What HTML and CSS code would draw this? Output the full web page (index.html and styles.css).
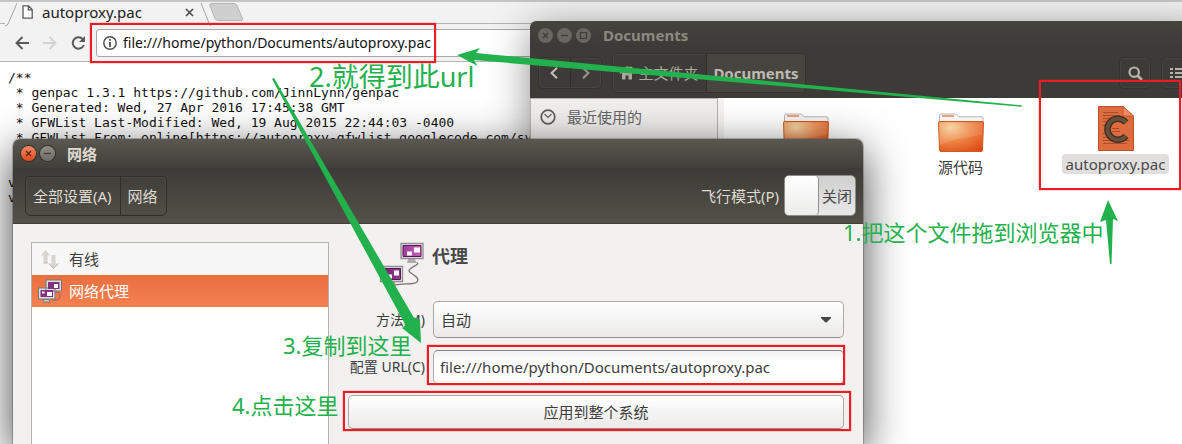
FILE: index.html
```html
<!DOCTYPE html>
<html lang="zh-CN">
<head>
<meta charset="utf-8">
<title>autoproxy.pac</title>
<link rel="stylesheet" href="styles.css">
</head>
<body>
<div class="desktop">
  <section class="browser" aria-label="autoproxy.pac">
    <div class="tabstrip">
      <svg class="tab-slope" width="12" height="24" viewBox="0 0 12 24"><path d="M0 24Q2 24 3 22L12 1" fill="none" stroke="#a5a5a5"/></svg>
      <div class="tab">
        <svg width="11" height="14" viewBox="0 0 11 14"><path d="M1 .8h5.500L10.200 4.500V13.200H1zM6.300.8v4h3.900" fill="#fff" stroke="#5a5a5a" stroke-width="1.300"/></svg>
        <span class="tab-title">autoproxy.pac</span>
        <button class="plain" aria-label="关闭标签页"><svg width="9" height="9" viewBox="0 0 9 9"><path d="M1 1l7 7M8 1L1 8" stroke="#4a4a4a" stroke-width="1.600"/></svg></button>
      </div>
      <svg class="tab-slope" width="11" height="24" viewBox="0 0 11 24"><path d="M1 1l8 20q1 3 2 3" fill="none" stroke="#a5a5a5"/></svg>
      <button class="plain new-tab" aria-label="新标签页"><svg width="35" height="18" viewBox="0 0 35 18"><path d="M3 .5h22q2 0 3 2l5.500 13q.7 2-1.500 2H9q-2 0-3-2L.8 2.500Q0 .5 3 .5z" fill="#cfcfcf" stroke="#b4b4b4"/></svg></button>
    </div>
    <div class="address-row">
      <button class="plain" aria-label="后退"><svg width="14" height="14" viewBox="0 0 14 14"><path d="M14 7H2M7.500 1L1.500 7l6 6" fill="none" stroke="#595959" stroke-width="1.900"/></svg></button>
      <button class="plain" aria-label="前进"><svg width="14" height="14" viewBox="0 0 14 14"><path d="M0 7h12M6.500 1l6 6-6 6" fill="none" stroke="#d2d2d2" stroke-width="1.900"/></svg></button>
      <button class="plain" aria-label="重新加载"><svg width="15" height="14" viewBox="0 0 15 14"><path d="M11.800 3.200A5.700 5.700 0 1 0 12.800 9" fill="none" stroke="#595959" stroke-width="2"/><path d="M14 0v6H8z" fill="#595959"/></svg></button>
      <div class="omnibox">
        <svg width="14" height="14" viewBox="0 0 14 14"><circle cx="7" cy="7" r="6.200" fill="none" stroke="#4a4a4a" stroke-width="1.400"/><path d="M7 3v1.700M7 6v5" stroke="#4a4a4a" stroke-width="1.700"/></svg>
        <input class="url" aria-label="地址" value="file:///home/python/Documents/autoproxy.pac">
      </div>
    </div>
    <pre class="source">/**
 * genpac 1.3.1 https://github.com/JinnLynn/genpac
 * Generated: Wed, 27 Apr 2016 17:45:38 GMT
 * GFWList Last-Modified: Wed, 19 Aug 2015 22:44:03 -0400
 * GFWList From: online[https://autoproxy-gfwlist.googlecode.com/svn


v
v</pre>
  </section>

  <section class="files" aria-label="Documents">
    <header class="files-head">
      <div class="files-title">
        <button class="dot dim" aria-label="关闭"><svg width="15" height="15" viewBox="0 0 15 15"><path d="M5 5l5 5M10 5l-5 5" stroke="#3b3a36" stroke-width="1.200"/></svg></button>
        <button class="dot dim" aria-label="最小化"><svg width="15" height="15" viewBox="0 0 15 15"><path d="M4 7.500h7" stroke="#3b3a36" stroke-width="1.200"/></svg></button>
        <button class="dot dim" aria-label="最大化"><svg width="15" height="15" viewBox="0 0 15 15"><path d="M4.500 4.500h6v6h-6z" fill="none" stroke="#3b3a36" stroke-width="1.200"/></svg></button>
        <strong>Documents</strong>
      </div>
      <div class="files-tools">
        <div class="group nav">
          <button aria-label="后退"><svg width="8" height="12" viewBox="0 0 8 12"><path d="M7 .8L1.600 6 7 11.200" fill="none" stroke="#c4c1b8" stroke-width="2"/></svg></button>
          <button aria-label="前进"><svg width="8" height="12" viewBox="0 0 8 12"><path d="M1 .8L6.400 6 1 11.200" fill="none" stroke="#99968e" stroke-width="2"/></svg></button>
        </div>
        <div class="group path">
          <button class="home"><svg width="14" height="14" viewBox="0 0 14 14"><path d="M0 7.500L7 1l2.500 2.300V1.500h2v3.700L14 7.500" fill="none" stroke="#aaa79f" stroke-width="1.600"/><path d="M2 7l5-4.500L12 7v6.500H8.500v-4h-3v4H2z" fill="#aaa79f"/></svg>主文件夹</button>
          <button class="here">Documents</button>
        </div>
        <button class="square find" aria-label="搜索"><svg width="15" height="15" viewBox="0 0 15 15"><circle cx="6.200" cy="6.200" r="4.700" fill="none" stroke="#b5b2a9" stroke-width="2.200"/><path d="M9.500 9.500L14 14" stroke="#b5b2a9" stroke-width="2.600"/></svg></button>
        <button class="square" aria-label="列表"><svg width="14" height="12" viewBox="0 0 14 12"><path d="M0 2h3M5 2h9M0 6h3M5 6h9M0 10h3M5 10h9" stroke="#b5b2a9" stroke-width="2"/></svg></button>
      </div>
    </header>
    <div class="files-body">
      <nav class="places">
        <a href="#recent"><svg width="16" height="16" viewBox="0 0 16 16"><circle cx="8" cy="8" r="6.800" fill="none" stroke="#5f5f5c" stroke-width="1.700"/><path d="M4.500 5l3.500 3.500L11.500 5" fill="none" stroke="#5f5f5c" stroke-width="1.200"/></svg>最近使用的</a>
      </nav>
      <div class="icons">
        <div class="item">
          <svg class="folder" width="46" height="40" viewBox="0 0 46 40"><use href="#folder"/></svg>
        </div>
        <div class="item">
          <svg class="folder" width="46" height="40" viewBox="0 0 46 40">
            <defs>
              <radialGradient id="fold" cx=".28" cy=".2" r="1"><stop offset="0" stop-color="#f5cf96"/><stop offset=".45" stop-color="#ee8546"/><stop offset="1" stop-color="#dd4710"/></radialGradient>
              <g id="folder">
                <path d="M1.500 12V2.500q0-1.500 1.500-1.500h14q1.500 0 2.500 1.200l1.500 1.600h23q1 0 1 1V12z" fill="#f4f4f4" stroke="#b6b6b6"/>
                <path d="M4 3h12" stroke="#f0a077" stroke-width="2"/>
                <path d="M.5 9.500q0-1 1-1h43q1 0 1 1L44.500 37q0 1.500-1.500 1.500H3Q1.500 38.500 1.500 37z" fill="url(#fold)" stroke="#cf5a22"/>
                <path d="M1.500 9.500h43L44 22Q22 24 1.500 32z" fill="#fff" opacity=".13"/>
              </g>
            </defs>
            <use href="#folder"/>
          </svg>
          <span class="name">源代码</span>
        </div>
        <div class="item">
          <svg width="36" height="45" viewBox="0 0 36 45">
            <path d="M.5.500H25L35.500 10v34.500H.5z" fill="#de6b3e" stroke="#b9532b"/>
            <path d="M25 .5V9q0 1 1 1h9.500z" fill="#f08a61" stroke="#c65c32"/>
            <path d="M5 6.500h15M5 9.500h17M5 12.500h14M5 15.500h3M5 19.500h2M5 27.500h3M5 31.500h4M5 34.500h26M5 37.500h24M14 25.500h8M14 22.500h7" stroke="#a94c27"/>
            <path d="M28 16.500A10.500 10.500 0 1 0 28 30" fill="none" stroke="#3c2b20" stroke-width="6.500"/>
            <path d="M28 16.500A10.500 10.500 0 1 0 28 30" fill="none" stroke="#65503b" stroke-width="4"/>
          </svg>
          <span class="name picked">autoproxy.pac</span>
        </div>
      </div>
    </div>
  </section>

  <section class="network" aria-label="网络">
    <header class="net-title">
      <button class="dot close" aria-label="关闭"><svg width="15" height="15" viewBox="0 0 15 15"><path d="M5 5l5 5M10 5l-5 5" stroke="#5a2410" stroke-width="1.200"/></svg></button>
      <button class="dot" aria-label="最小化"><svg width="15" height="15" viewBox="0 0 15 15"><path d="M4 7.500h7" stroke="#3b3a36" stroke-width="1.200"/></svg></button>
      <strong>网络</strong>
    </header>
    <div class="net-tools">
      <div class="group crumbs"><button>全部设置(A)</button><button>网络</button></div>
      <label class="flight">飞行模式(P)
        <input type="checkbox" class="sr">
        <span class="switch"><i></i><b>关闭</b></span>
      </label>
    </div>
    <div class="net-body">
      <div class="devices">
        <button class="device">
          <svg width="24" height="24" viewBox="0 0 24 24"><path d="M7.500 3L12 8.500H9.500V16h-4V8.500H3z" fill="#d9d6cf"/><path d="M13.500 8v8.500H11L15.500 21.500l5-5H17.500V8z" fill="#d9d6cf"/><path d="M5.500 16h4M11 16.500l4.500 5 5-5" fill="none" stroke="#bab7b0"/></svg>有线</button>
        <button class="device current">
          <svg width="24" height="24" viewBox="0 0 24 24"><path d="M18 13q5 1 4 5t-8 3" fill="none" stroke="#8a6b5d"/><path d="M8 1h15.500v11H8zM.5 9H17v11H.5z" fill="#ddd" stroke="#777"/><path d="M10 3h11.500v7H10zM2.500 11H15v7H2.500z" fill="#82307f"/><path d="M16 5h4v4h-4zM9 13h5v4H9zM4 12.500h2.500v2H4z" fill="#fff"/><path d="M6 20.500h5l1 2.500H5z" fill="#ccc" stroke="#777"/></svg>网络代理</button>
      </div>
      <form class="proxy">
        <div class="heading">
          <svg width="46" height="46" viewBox="0 0 46 46">
            <defs><linearGradient id="scr"><stop stop-color="#71206f"/><stop offset="1" stop-color="#c65bbb"/></linearGradient></defs>
            <path d="M38 21c4 1-9 5-8 8s12 6 8 11c-3 3-14 1-22 3" fill="none" stroke="#777" stroke-width="1.300"/>
            <path d="M29 17h7l1 3h2v1H28z" fill="#aaa"/><path d="M9 40h7l1 4H8z" fill="#aaa"/>
            <path d="M22 1.500h22v15H22zM1.500 24.500h22v15h-22z" fill="#e5e5e5" stroke="#909090" stroke-width="1.300"/>
            <path d="M24 3.500h18v11H24zM3.500 26.500h18v11h-18z" fill="url(#scr)" stroke="#5b175b"/>
            <path d="M35 5.500h6v5h-6zM28 9.500h5v4h-5zM15 28.500h5v5h-5zM8 32.500h5v4H8z" fill="#fff"/>
          </svg>
          <h1>代理</h1>
        </div>
        <div class="fields">
          <label for="method">方法(M)</label>
          <div class="pick"><select id="method"><option>自动</option></select><svg width="10" height="6" viewBox="0 0 10 6"><path d="M0 0h10v1L5.500 5.500h-1L0 1z" fill="#454545"/></svg></div>
          <label for="conf">配置 URL(C)</label>
          <input id="conf" class="conf" value="file:///home/python/Documents/autoproxy.pac">
        </div>
        <button type="button" class="apply">应用到整个系统</button>
      </form>
    </div>
  </section>

  <div class="frame frame-url"></div>
  <div class="frame frame-file"></div>
  <div class="frame frame-conf"></div>
  <div class="frame frame-apply"></div>
  <p class="note note-file">1.把这个文件拖到浏览器中</p>
  <p class="note note-url">2.就得到此url</p>
  <p class="note note-copy">3.复制到这里</p>
  <p class="note note-click">4.点击这里</p>
  <svg class="arrows" width="1182" height="444" viewBox="0 0 1182 444" aria-hidden="true">
    <path d="M457 55L480 48 476 53 1022 105.300 1021.500 106.800 474 60 477.500 66z"/>
    <path d="M272 79L274 78 413.500 317 420 320 421 343 402 328 405.500 325z"/>
    <path d="M1108 200L1118 221 1113 219 1111.500 264H1110L1106 220 1100 222z"/>
  </svg>
</div>
</body>
</html>
```
FILE: styles.css
```css
* { box-sizing: border-box; }
body {
  margin: 0;
  font: 15px/20px "Noto Sans", "Noto Sans CJK SC", sans-serif;
  color: #3c3c3c;
}
button, input, select { font: inherit; color: inherit; margin: 0; }
button { padding: 0; border: 0; background: none; }
svg { display: block; flex: none; }
.desktop { position: relative; height: 100vh; min-height: 444px; overflow: hidden; background: #fff; }

/* browser */
.tabstrip { display: flex; height: 24px; padding-left: 5px; background: #f2f2f2; border-top: 2px solid #c4c4c4; box-shadow: inset 0 -1px #b5b5b5; }
.tab-slope { background: #f2f2f2; }
.tab { display: flex; align-items: center; width: 183px; height: 22px; padding: 0 6px 2px 5px; background: #f2f2f2; }
.tab-title { flex: 1; margin-left: 9px; font-size: 15px; line-height: 18px; color: #222; }
.plain { display: grid; place-items: center; }
.new-tab { align-self: flex-start; margin: 1px 0 0 -2px; }
.address-row { display: flex; align-items: center; gap: 14px; height: 38px; padding: 0 15px; background: #f2f2f2; border-bottom: 1px solid #b5b5b5; }
.omnibox { flex: 1; display: flex; align-items: center; gap: 6px; height: 28px; margin-left: -4px; padding-left: 6px; background: #fff; border: 1px solid #a8a8a8; border-radius: 3px; }
.url { flex: 1; height: 24px; padding: 0; border: 0; background: none; font-size: 14px; color: #111; }
.source { margin: 0; padding: 8px; font: 13px/15px "DejaVu Sans Mono", monospace; color: #111; }

/* shared window parts */
.dot { width: 15px; height: 15px; border-radius: 50%; background: linear-gradient(#8f8d86, #6d6b65); box-shadow: 0 0 0 1px #33322e; }
.dot.dim { background: #686660; box-shadow: none; }
.dot.close { background: linear-gradient(#f58a63, #e0491b); }
.group { display: flex; border: 1px solid #302f2c; border-radius: 5px; box-shadow: inset 0 0 0 1px #4c4a45; }
.group button { display: flex; align-items: center; justify-content: center; }
.group button + button { border-left: 1px solid #302f2c; }

/* file manager */
.files { position: absolute; left: 530px; right: -20px; top: 21px; bottom: 0; display: flex; flex-direction: column; border-radius: 6px 6px 0 0; background: #fff; box-shadow: 0 8px 40px rgba(0, 0, 0, .45); }
.files-head { height: 77px; border-radius: 6px 6px 0 0; background: linear-gradient(#45443f, #3c3b37 24px); }
.files-title { display: flex; align-items: center; gap: 4px; height: 28px; padding-left: 8px; color: #8b8880; }
.files-title strong { margin-left: 8px; }
.files-tools { display: flex; align-items: center; gap: 10px; height: 49px; padding: 0 9px 1px 8px; color: #aaa79f; }
.nav, .path { border-color: #343330; box-shadow: inset 0 0 0 1px #45443f; }
.nav { width: 64px; height: 32px; }
.nav button { flex: 1; }
.path { height: 40px; }
.home { gap: 4px; width: 93px; }
.here { width: 99px; font-weight: 700; color: #bdbab1; background: #47453f; border-radius: 0 4px 4px 0; }
.square { display: grid; place-items: center; width: 32px; height: 32px; border: 1px solid #353430; border-radius: 5px; box-shadow: inset 0 0 0 1px #45443f; }
.find { margin-left: auto; }
.files-body { flex: 1; display: flex; }
.places { width: 188px; border: 1px solid #b3b2b0; border-bottom: 0; background: #efeeec; }
.places a { display: flex; align-items: center; gap: 11px; height: 36px; padding-left: 9px; color: #666; text-decoration: none; }
.icons { flex: 1; display: grid; grid-template-columns: repeat(3, 155px); align-content: start; padding: 8px 0 0 4px; border-left: 6px solid #f4f3f2; }
.item { display: flex; flex-direction: column; align-items: center; }
.folder { margin-top: 7px; }
.folder + .name { margin-top: 4px; }
.name { padding: 0 4px; border-radius: 4px; }
.picked { margin-top: 3px; background: #e0dfde; color: #4a4a4a; }

/* network dialog */
.network { position: absolute; left: 13px; top: 139px; bottom: 0; width: 850px; display: flex; flex-direction: column; border-radius: 7px 7px 0 0; background: #f2f1ef; box-shadow: 0 12px 44px rgba(0, 0, 0, .75), 0 0 0 1px rgba(80, 80, 75, .3); }
.net-title { display: flex; align-items: center; gap: 4px; height: 29px; padding-left: 8px; border-radius: 7px 7px 0 0; background: linear-gradient(#5a5850, #403f3a); color: #dfdbd2; }
.net-title strong { margin-left: 8px; }
.net-tools { display: flex; align-items: center; justify-content: space-between; height: 56px; padding: 0 7px 0 12px; background: linear-gradient(#3c3b37, #545149); border-bottom: 1px solid #403e39; color: #dfdbd2; }
.crumbs { height: 40px; }
.crumbs button { padding: 0 8px 0 7px; }
.flight { display: flex; align-items: center; gap: 5px; }
.sr { position: absolute; opacity: 0; pointer-events: none; }
.switch { display: flex; width: 72px; height: 41px; border: 1px solid #8f8d88; border-radius: 5px; background: linear-gradient(#cfcfcf, #e8e8e8); color: #4a4a4a; }
.switch i { width: 34px; border-right: 1px solid #8f8f8f; border-radius: 4px; background: linear-gradient(#fff, #ececeb); }
.switch b { flex: 1; align-self: center; text-align: center; font-weight: 400; font-size: 15px; }
.net-body { flex: 1; display: flex; gap: 19px; padding: 18px 19px 0 18px; }
.devices { width: 298px; border: 1px solid #b5b4b1; border-bottom: 0; background: #fff; }
.device { display: flex; align-items: center; gap: 7px; width: 100%; height: 32px; padding-left: 6px; background: #f7f7f7; }
.current { color: #fff; background: linear-gradient(#e96f3f, #f58050); }
.proxy { flex: 1; }
.heading { display: flex; gap: 7px; margin-left: 31px; height: 59px; }
h1 { margin: 1px 0 0; font-size: 18px; line-height: 26px; color: #484848; }
.fields { display: grid; grid-template-columns: 77px 1fr; align-items: center; gap: 12px 8px; margin-bottom: 11px; }
.fields label { text-align: right; white-space: nowrap; font-size: 14px; }
.pick { display: grid; align-items: center; }
.pick > * { grid-area: 1 / 1; }
.pick svg { justify-self: end; margin-right: 13px; pointer-events: none; }
.pick select { width: 100%; height: 37px; padding: 0 7px; appearance: none; }
.pick select, .apply { border: 1px solid #aaa9a6; border-bottom-color: #8f8e8b; border-radius: 5px; background: linear-gradient(#fff, #ebeae9); }
.conf { width: 100%; height: 34px; padding: 0 6px; border: 1px solid #aaa; border-top-color: #858585; border-radius: 5px; background: linear-gradient(#f1f1f1, #fff 10px); }
.apply { width: 100%; height: 34px; }

/* annotations */
.frame { position: absolute; border: 2px solid #ed1c24; box-shadow: 0 0 1px #ed1c24; }
.frame-url { left: 90px; top: 23px; width: 346px; height: 40px; }
.frame-file { left: 1039px; top: 80px; width: 142px; height: 110px; }
.frame-conf { left: 427px; top: 345px; width: 418px; height: 40px; }
.frame-apply { left: 343px; top: 391px; width: 508px; height: 40px; }
.note { position: absolute; margin: 0; font-size: 22px; line-height: 30px; white-space: nowrap; color: #22b14c; }
.note-file { left: 843px; top: 217px; }
.note-url { left: 309px; top: 62px; font-size: 27px; }
.note-copy { left: 283px; top: 330px; }
.note-click { left: 232px; top: 390px; }
.arrows { position: absolute; left: 0; top: 0; fill: #22b14c; pointer-events: none; }
```
